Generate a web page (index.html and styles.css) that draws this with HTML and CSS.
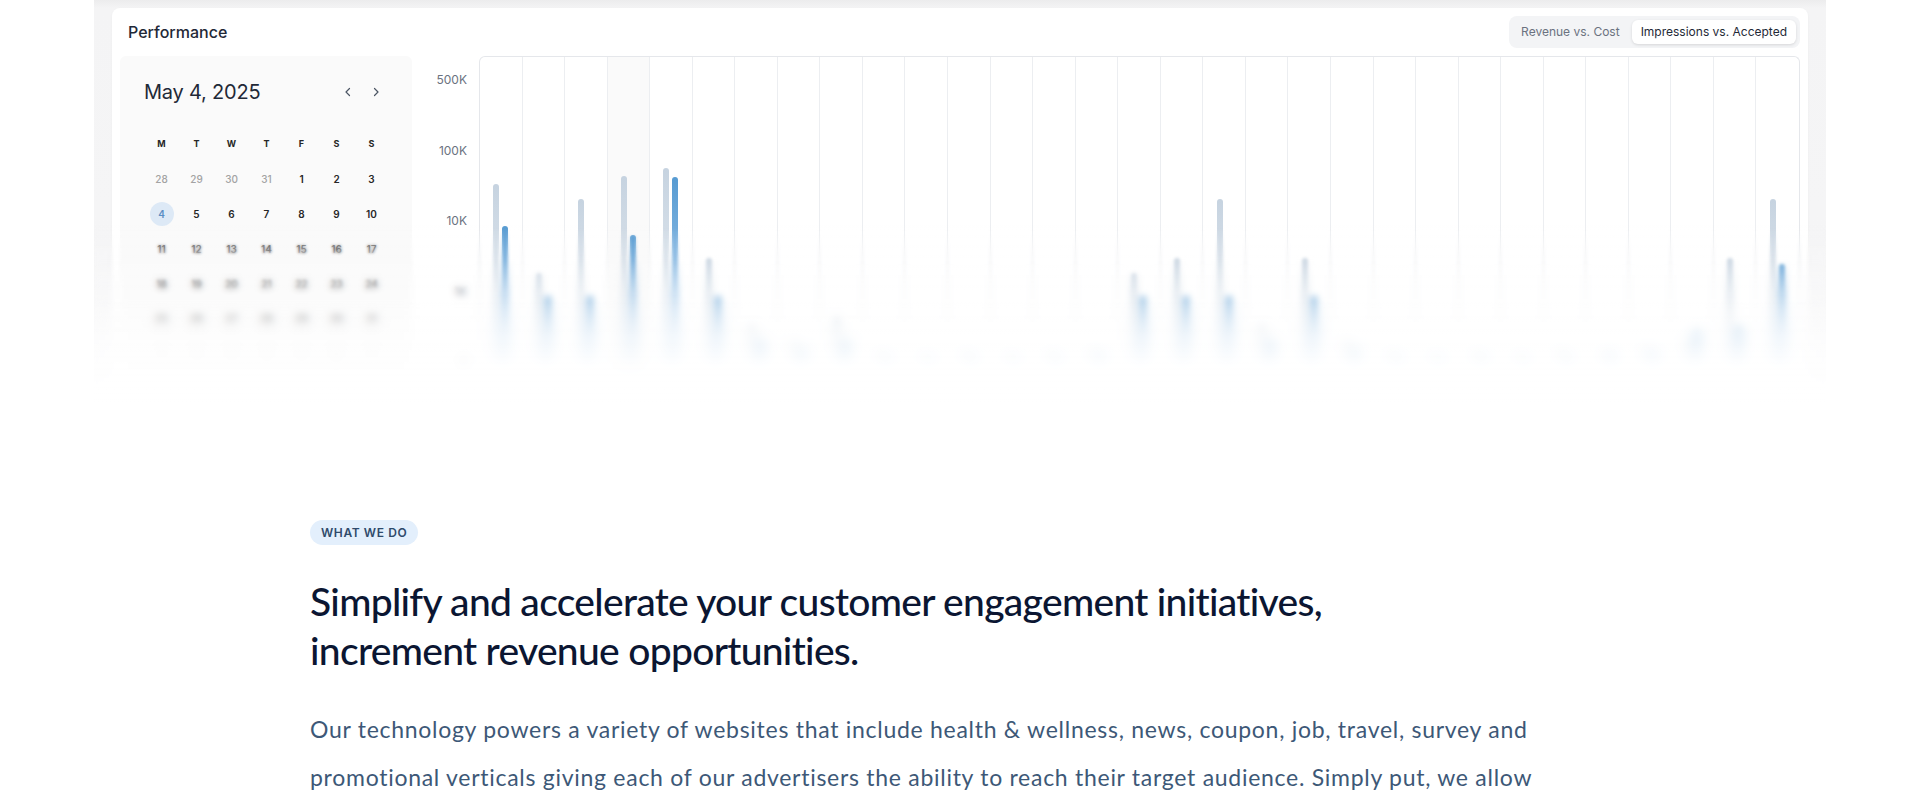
FILE: index.html
```html
<!DOCTYPE html>
<html lang="en">
<head>
<meta charset="utf-8">
<title>Performance</title>
<link rel="stylesheet" href="styles.css">
</head>
<body>
<div class="hero">
  <div class="card">
    <div class="card-head">
      <h2 class="card-title">Performance</h2>
      <div class="toggle">
        <span class="toggle-btn">Revenue vs. Cost</span>
        <span class="toggle-btn active">Impressions vs. Accepted</span>
      </div>
    </div>
    <div class="card-body">
      <div class="calendar">
        <div class="cal-head">
          <span class="cal-title">May 4, 2025</span>
          <div class="cal-nav">
            <span class="cal-arrow"><svg width="10" height="10" viewBox="0 0 10 10"><polyline points="6.5,1.5 3,5 6.5,8.5" fill="none" stroke="#4b5563" stroke-width="1.2" stroke-linecap="round" stroke-linejoin="round"/></svg></span>
            <span class="cal-arrow"><svg width="10" height="10" viewBox="0 0 10 10"><polyline points="3.5,1.5 7,5 3.5,8.5" fill="none" stroke="#4b5563" stroke-width="1.2" stroke-linecap="round" stroke-linejoin="round"/></svg></span>
          </div>
        </div>
        <div class="cal-grid">
          <span class="dow">M</span><span class="dow">T</span><span class="dow">W</span><span class="dow">T</span><span class="dow">F</span><span class="dow">S</span><span class="dow">S</span>
          <span class="day muted">28</span><span class="day muted">29</span><span class="day muted">30</span><span class="day muted">31</span><span class="day">1</span><span class="day">2</span><span class="day">3</span>
          <span class="day selected"><span class="sel">4</span></span><span class="day">5</span><span class="day">6</span><span class="day">7</span><span class="day">8</span><span class="day">9</span><span class="day">10</span>
          <span class="day">11</span><span class="day">12</span><span class="day">13</span><span class="day">14</span><span class="day">15</span><span class="day">16</span><span class="day">17</span>
          <span class="day">18</span><span class="day">19</span><span class="day">20</span><span class="day">21</span><span class="day">22</span><span class="day">23</span><span class="day">24</span>
          <span class="day">25</span><span class="day">26</span><span class="day">27</span><span class="day">28</span><span class="day">29</span><span class="day">30</span><span class="day">31</span>
          <span class="day muted">1</span><span class="day muted">2</span><span class="day muted">3</span><span class="day muted">4</span><span class="day muted">5</span><span class="day muted">6</span><span class="day muted">7</span>
        </div>
      </div>
      <div class="axis">
        <span>500K</span><span>100K</span><span>10K</span><span>1K</span><span>0</span>
      </div>
      <div class="chart">
        <div class="col"><i class="bar g" style="height:177px"></i><i class="bar b" style="height:135px"></i></div>
        <div class="col"><i class="bar g" style="height:88px"></i><i class="bar b" style="height:65px"></i></div>
        <div class="col"><i class="bar g" style="height:162px"></i><i class="bar b" style="height:65px"></i></div>
        <div class="col today"><i class="bar g" style="height:185px"></i><i class="bar b" style="height:126px"></i></div>
        <div class="col"><i class="bar g" style="height:193px"></i><i class="bar b" style="height:184px"></i></div>
        <div class="col"><i class="bar g" style="height:103px"></i><i class="bar b" style="height:65px"></i></div>
        <div class="col"><i class="bar g" style="height:36px"></i><i class="bar b" style="height:20px"></i></div>
        <div class="col"><i class="bar g" style="height:20px"></i><i class="bar b" style="height:12px"></i></div>
        <div class="col"><i class="bar g" style="height:44px"></i><i class="bar b" style="height:20px"></i></div>
        <div class="col"><i class="bar g" style="height:10px"></i><i class="bar b" style="height:6px"></i></div>
        <div class="col"><i class="bar g" style="height:8px"></i><i class="bar b" style="height:5px"></i></div>
        <div class="col"><i class="bar g" style="height:10px"></i><i class="bar b" style="height:6px"></i></div>
        <div class="col"><i class="bar g" style="height:8px"></i><i class="bar b" style="height:5px"></i></div>
        <div class="col"><i class="bar g" style="height:10px"></i><i class="bar b" style="height:6px"></i></div>
        <div class="col"><i class="bar g" style="height:12px"></i><i class="bar b" style="height:8px"></i></div>
        <div class="col"><i class="bar g" style="height:88px"></i><i class="bar b" style="height:65px"></i></div>
        <div class="col"><i class="bar g" style="height:103px"></i><i class="bar b" style="height:65px"></i></div>
        <div class="col"><i class="bar g" style="height:162px"></i><i class="bar b" style="height:65px"></i></div>
        <div class="col"><i class="bar g" style="height:36px"></i><i class="bar b" style="height:20px"></i></div>
        <div class="col"><i class="bar g" style="height:103px"></i><i class="bar b" style="height:65px"></i></div>
        <div class="col"><i class="bar g" style="height:20px"></i><i class="bar b" style="height:12px"></i></div>
        <div class="col"><i class="bar g" style="height:10px"></i><i class="bar b" style="height:6px"></i></div>
        <div class="col"><i class="bar g" style="height:8px"></i><i class="bar b" style="height:5px"></i></div>
        <div class="col"><i class="bar g" style="height:10px"></i><i class="bar b" style="height:6px"></i></div>
        <div class="col"><i class="bar g" style="height:8px"></i><i class="bar b" style="height:5px"></i></div>
        <div class="col"><i class="bar g" style="height:12px"></i><i class="bar b" style="height:6px"></i></div>
        <div class="col"><i class="bar g" style="height:10px"></i><i class="bar b" style="height:8px"></i></div>
        <div class="col"><i class="bar g" style="height:14px"></i><i class="bar b" style="height:10px"></i></div>
        <div class="col"><i class="bar g" style="height:20px"></i><i class="bar b" style="height:30px"></i></div>
        <div class="col"><i class="bar g" style="height:103px"></i><i class="bar b" style="height:34px"></i></div>
        <div class="col"><i class="bar g" style="height:162px"></i><i class="bar b" style="height:97px"></i></div>
      </div>
    </div>
  </div>
  <div class="blur blur-1"></div>
  <div class="blur blur-2"></div>
  <div class="blur blur-3"></div>
  <div class="fade"></div>
</div>

<section class="about">
  <span class="pill">WHAT WE DO</span>
  <h1 class="about-title">Simplify and accelerate your customer engagement initiatives, increment revenue opportunities.</h1>
  <p class="about-text">Our technology powers a variety of websites that include health &amp; wellness, news, coupon, job, travel, survey and promotional verticals giving each of our advertisers the ability to reach their target audience. Simply put, we allow advertisers to connect with the right consumers at the right time.</p>
</section>
</body>
</html>
```

FILE: styles.css
```css
* { box-sizing: border-box; }

body {
  margin: 0;
  background: #ffffff;
  font-family: Inter, "Noto Sans", sans-serif;
  color: #1f2937;
}

/* ---------- hero frame ---------- */
.hero {
  position: relative;
  width: 1732px;
  height: 410px;
  margin: 0 auto;
  padding: 8px 18px 0;
  overflow: hidden;
  background: linear-gradient(#ececed 0, #f4f4f5 8px, #f6f6f7 100%);
}

.card {
  height: 100%;
  padding: 8px;
  background: #ffffff;
  border-radius: 8px 8px 0 0;
  box-shadow: 0 1px 3px rgba(0, 0, 0, 0.04);
}

.card-head {
  display: flex;
  align-items: center;
  justify-content: space-between;
  height: 32px;
}

.card-title {
  margin: 0;
  padding-left: 8px;
  font-size: 16px;
  font-weight: 500;
  color: #1f2937;
}

.toggle {
  display: flex;
  gap: 4px;
  padding: 4px;
  background: #f3f4f6;
  border-radius: 8px;
}

.toggle-btn {
  display: block;
  height: 24px;
  line-height: 24px;
  padding: 0 8px;
  font-size: 12px;
  color: #6b7280;
  border-radius: 6px;
}

.toggle-btn.active {
  padding: 0 9px;
  background: #ffffff;
  color: #1f2937;
  box-shadow: 0 1px 3px rgba(0, 0, 0, 0.12);
}

.card-body {
  display: flex;
  margin-top: 8px;
}

/* ---------- calendar ---------- */
.calendar {
  width: 292px;
  height: 330px;
  flex: none;
  padding: 24px 24px 0;
  background: #fafafa;
  border-radius: 6px;
}

.cal-head {
  display: flex;
  align-items: center;
  justify-content: space-between;
  height: 24px;
}

.cal-title {
  font-size: 20px;
  font-weight: 400;
  color: #1f2937;
  letter-spacing: -0.2px;
}

.cal-nav {
  display: flex;
  gap: 4px;
}

.cal-arrow {
  display: flex;
  align-items: center;
  justify-content: center;
  width: 24px;
  height: 24px;
}

.cal-grid {
  display: grid;
  grid-template-columns: repeat(7, 35px);
  grid-auto-rows: 35px;
  margin-top: 22px;
}

.dow, .day {
  display: flex;
  align-items: center;
  justify-content: center;
  color: #262626;
}

.dow {
  font-size: 9px;
  font-weight: 700;
}

.day {
  font-size: 10px;
  font-weight: 600;
}

.day.muted {
  color: #a3a3a3;
  font-weight: 500;
}

.sel {
  display: flex;
  align-items: center;
  justify-content: center;
  width: 24px;
  height: 24px;
  border-radius: 50%;
  background: #dde9f6;
  color: #5b8ec4;
}

/* ---------- axis ---------- */
.axis {
  width: 67px;
  flex: none;
  display: flex;
  flex-direction: column;
  align-items: flex-end;
  gap: 52.5px;
  padding: 15px 12px 0 0;
}

.axis span {
  display: block;
  height: 18px;
  line-height: 18px;
  font-size: 12px;
  color: #6b7280;
}

/* ---------- chart ---------- */
.chart {
  flex: 1;
  height: 346px;
  display: grid;
  grid-template-columns: repeat(31, 1fr);
  border: 1px solid #e5e7eb;
  border-bottom: 0;
  border-radius: 6px 6px 0 0;
  overflow: hidden;
}

.col {
  display: flex;
  align-items: flex-end;
  justify-content: center;
  gap: 3px;
  padding-bottom: 41px;
  border-right: 1px solid #eceef1;
}

.col:last-child { border-right: 0; }

.col.today { background: #fafafa; }

.bar {
  display: block;
  width: 6px;
  border-radius: 3px 3px 0 0;
}

.bar.g {
  background: linear-gradient(#c6d3e0, rgba(198, 211, 224, 0.6) 60%, rgba(190, 215, 240, 0.55));
}

.bar.b {
  background: linear-gradient(#579bd2, rgba(110, 170, 222, 0.75) 60%, rgba(150, 195, 235, 0.6));
}

/* ---------- fade / blur overlays ---------- */
.blur {
  position: absolute;
  left: 0;
  right: 0;
  bottom: 0;
}

.blur-1 {
  top: 228px;
  backdrop-filter: blur(1.5px);
  -webkit-mask-image: linear-gradient(transparent 0, #000 30px);
  mask-image: linear-gradient(transparent 0, #000 30px);
}

.blur-2 {
  top: 258px;
  backdrop-filter: blur(3px);
  -webkit-mask-image: linear-gradient(transparent 0, #000 35px);
  mask-image: linear-gradient(transparent 0, #000 35px);
}

.blur-3 {
  top: 295px;
  backdrop-filter: blur(6px);
  -webkit-mask-image: linear-gradient(transparent 0, #000 40px);
  mask-image: linear-gradient(transparent 0, #000 40px);
}

.fade {
  position: absolute;
  left: 0;
  right: 0;
  top: 225px;
  bottom: 0;
  background: linear-gradient(rgba(255, 255, 255, 0) 0, rgba(255, 255, 255, 0.3) 70px, rgba(255, 255, 255, 0.75) 125px, #ffffff 180px);
}

/* ---------- about section ---------- */
.about {
  width: 1300px;
  margin: 110px auto 0;
  font-family: Lato, "Open Sans", sans-serif;
}

.pill {
  display: inline-block;
  height: 25px;
  line-height: 25px;
  padding: 0 11px;
  border-radius: 13px;
  background: #e3effc;
  color: #2f4a6b;
  font-family: Inter, sans-serif;
  font-size: 12px;
  font-weight: 600;
  letter-spacing: 0.6px;
}

.about-title {
  max-width: 1100px;
  margin: 32px 0 0;
  font-size: 39px;
  line-height: 49px;
  font-weight: 500;
  letter-spacing: -0.7px;
  color: #0b1632;
}

.about-text {
  margin: 31px 0 0;
  font-size: 23px;
  line-height: 47.5px;
  color: #3d5877;
  letter-spacing: 0.72px;
}
```
